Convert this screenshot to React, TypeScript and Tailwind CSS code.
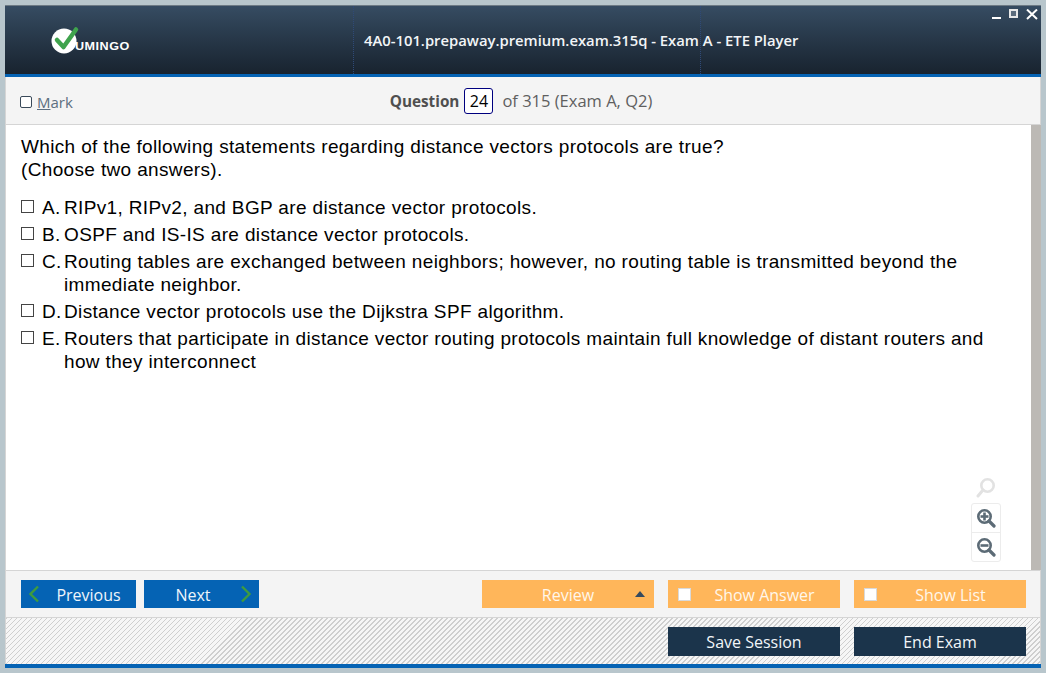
const uiFont = "font-['Open_Sans','Noto_Sans',sans-serif]"

const answers = [
  { letter: 'A.', text: 'RIPv1, RIPv2, and BGP are distance vector protocols.' },
  { letter: 'B.', text: 'OSPF and IS-IS are distance vector protocols.' },
  {
    letter: 'C.',
    text: 'Routing tables are exchanged between neighbors; however, no routing table is transmitted beyond the immediate neighbor.',
  },
  { letter: 'D.', text: 'Distance vector protocols use the Dijkstra SPF algorithm.' },
  {
    letter: 'E.',
    text: 'Routers that participate in distance vector routing protocols maintain full knowledge of distant routers and how they interconnect',
  },
]

function Logo() {
  return (
    <div className="flex items-end">
      <svg width="30" height="28" viewBox="0 0 30 28" className="ml-[-1px]">
        <circle cx="14" cy="15" r="12.5" fill="#ffffff" />
        <path d="M7 14 L13.5 21 L26 3.5" fill="none" stroke="#3fa34d" strokeWidth="4.5" strokeLinecap="round" strokeLinejoin="round" />
      </svg>
      <span className="mb-[1px] ml-[-5px] origin-left scale-x-[1.26] font-['Liberation_Sans',sans-serif] text-[10px] leading-[12px] font-bold tracking-[0.4px] text-white">
        UMINGO
      </span>
    </div>
  )
}

function MagnifierIcon({ kind, color }: { kind: 'plain' | 'plus' | 'minus'; color: string }) {
  return (
    <svg width="20" height="20" viewBox="0 0 20 20" fill="none">
      <circle cx={kind === 'plain' ? 11.5 : 8.5} cy={kind === 'plain' ? 7.5 : 8.5} r="6.2" stroke={color} strokeWidth="2.6" />
      {kind === 'plain' ? (
        <path d="M7 12 L2 18" stroke={color} strokeWidth="3" strokeLinecap="round" />
      ) : (
        <path d="M13 13 L18 18" stroke={color} strokeWidth="3.2" strokeLinecap="round" />
      )}
      {kind !== 'plain' && <path d="M4.5 8.5 H12.5" stroke={color} strokeWidth="2.6" />}
      {kind === 'plus' && <path d="M8.5 4.5 V12.5" stroke={color} strokeWidth="2.6" />}
    </svg>
  )
}

function Chevron({ dir }: { dir: 'left' | 'right' }) {
  return (
    <svg width="12" height="18" viewBox="0 0 12 18" fill="none">
      <path d={dir === 'left' ? 'M10 1.5 L2.5 9 L10 16.5' : 'M2 1.5 L9.5 9 L2 16.5'} stroke="#3f9b3f" strokeWidth="2.4" />
    </svg>
  )
}

function OrangeButton({ label, withBox }: { label: string; withBox?: boolean }) {
  return (
    <button className="relative h-[28px] w-[172px] bg-[#ffb65a] pt-[1px] text-[16px] text-[#fff7ea]">
      {withBox && <span className="absolute top-[8px] left-[10px] h-[13px] w-[13px] border border-[#d9d9d9] bg-white" />}
      <span className={withBox ? 'pl-[21px]' : ''}>{label}</span>
    </button>
  )
}

export default function App() {
  return (
    <div className={`h-[673px] w-[1046px] overflow-hidden bg-[#b8c6cc] p-[5px] ${uiFont}`}>
      <div className="flex h-[663px] w-[1036px] flex-col border-b-[4px] border-[#0563b4]">
        <header className="relative flex h-[69px] shrink-0 items-center border-t border-[#6d7a84] bg-gradient-to-b from-[#364c62] to-[#18232f]">
          <div className="mt-[-1px] ml-[46px] w-[302px]">
            <Logo />
          </div>
          <div className="flex h-full w-[348px] items-center border-x border-dotted border-[#2f4a78] pl-[10px]">
            <span className="mt-[1px] text-[14.8px] font-semibold whitespace-nowrap text-[#f2f5f7]">
              4A0-101.prepaway.premium.exam.315q - Exam A - ETE Player
            </span>
          </div>
          <div className="absolute top-[3px] right-[3px] flex items-start gap-[8px]">
            <span className="mt-[8px] h-[2px] w-[9px] bg-white" />
            <span className="h-[9px] w-[9px] border-2 border-[#e8e8e8] bg-white/20" />
            <svg width="12" height="11" viewBox="0 0 12 11">
              <path d="M1 0.5 L11 10 M11 0.5 L1 10" stroke="#ffffff" strokeWidth="2" />
            </svg>
          </div>
        </header>
        <div className="h-[3px] shrink-0 bg-[#0563b4]" />

        <div className="relative flex h-[48px] shrink-0 items-center justify-center border-x border-b border-[#d5d5d5] bg-[#f4f4f4]">
          <label className="absolute top-[16px] left-[14px] flex items-center gap-[5px] text-[15px] leading-[18px] text-[#5c6f80]">
            <span className="h-[12px] w-[12px] rounded-[2px] border border-[#3a4a5a] bg-white" />
            <span>
              <span className="underline">M</span>ark
            </span>
          </label>
          <div className="ml-[-4px] flex items-center text-[#5f5f5f]">
            <span className="pt-[2px] text-[15.3px] font-bold text-[#4f4f4f]">Question</span>
            <span className="mx-[5px] flex h-[26px] w-[29px] items-center justify-center rounded-[3px] border border-[#00007f] bg-white text-[16px] text-black">
              24
            </span>
            <span className="ml-[4px] pt-[2px] text-[16.5px]">of 315 (Exam A, Q2)</span>
          </div>
        </div>

        <main className="flex min-h-0 flex-1 border-l border-[#d5d5d5]">
          <div className="relative flex-1 bg-white pt-[10px] pr-[30px] pl-[15px] font-['Liberation_Sans',sans-serif] text-[19px] leading-[23px] tracking-[0.35px] text-black">
            <p>
              Which of the following statements regarding distance vectors protocols are true?
              <br />
              (Choose two answers).
            </p>
            <ul className="mt-[15px] flex flex-col gap-[4px]">
              {answers.map((a) => (
                <li key={a.letter} className="flex">
                  <span className="mt-[4px] h-[13px] w-[13px] shrink-0 border border-[#444444]" />
                  <span className="ml-[8px] w-[22px] shrink-0 whitespace-nowrap">{a.letter}</span>
                  <span>{a.text}</span>
                </li>
              ))}
            </ul>
            <div className="absolute right-[30px] bottom-[8px] flex flex-col items-center">
              <MagnifierIcon kind="plain" color="#e2e2e2" />
              <div className="mt-[5px] flex h-[59px] w-[30px] flex-col items-center rounded-[3px] border border-[#ececec]">
                <div className="flex h-[29px] w-full items-center justify-center border-b border-[#ececec]">
                  <MagnifierIcon kind="plus" color="#5c6b76" />
                </div>
                <div className="flex flex-1 items-center justify-center">
                  <MagnifierIcon kind="minus" color="#5c6b76" />
                </div>
              </div>
            </div>
          </div>
          <div className="w-[10px] shrink-0 bg-[#bcb9b5]" />
        </main>

        <div className="flex h-[48px] shrink-0 items-center justify-between border border-[#d5d5d5] bg-[#f4f4f4] pr-[14px] pl-[15px]">
          <div className="flex gap-[8px]">
            <button className="relative flex h-[28px] w-[115px] items-center justify-center bg-[#0563b4] pt-[1px] pl-[20px] text-[16px] text-[#eef5fb]">
              <span className="absolute top-[5px] left-[7px]">
                <Chevron dir="left" />
              </span>
              Previous
            </button>
            <button className="relative flex h-[28px] w-[115px] items-center justify-center bg-[#0563b4] pt-[1px] pr-[17px] text-[16px] text-[#eef5fb]">
              Next
              <span className="absolute top-[5px] right-[7px]">
                <Chevron dir="right" />
              </span>
            </button>
          </div>
          <div className="flex gap-[14px]">
            <button className="relative h-[28px] w-[172px] bg-[#ffb65a] pt-[1px] text-[16px] text-[#fff7ea]">
              Review
              <span className="absolute top-[11px] right-[9px] h-0 w-0 border-x-[5px] border-b-[6px] border-x-transparent border-b-[#34495e]" />
            </button>
            <OrangeButton label="Show Answer" withBox />
            <OrangeButton label="Show List" withBox />
          </div>
        </div>

        <div className="flex h-[46px] shrink-0 items-start justify-end gap-[14px] border-x border-[#d5d5d5] bg-[#f4f4f4] bg-[repeating-linear-gradient(135deg,#cfcfcf_0px,#cfcfcf_1.2px,#f6f6f6_1.2px,#f6f6f6_3.54px)] pt-[9px] pr-[14px]">
          <button className="h-[29px] w-[172px] bg-[#1b344b] text-[16px] text-[#f2f6f9]">Save Session</button>
          <button className="h-[29px] w-[172px] bg-[#1b344b] text-[16px] text-[#f2f6f9]">End Exam</button>
        </div>
      </div>
    </div>
  )
}
